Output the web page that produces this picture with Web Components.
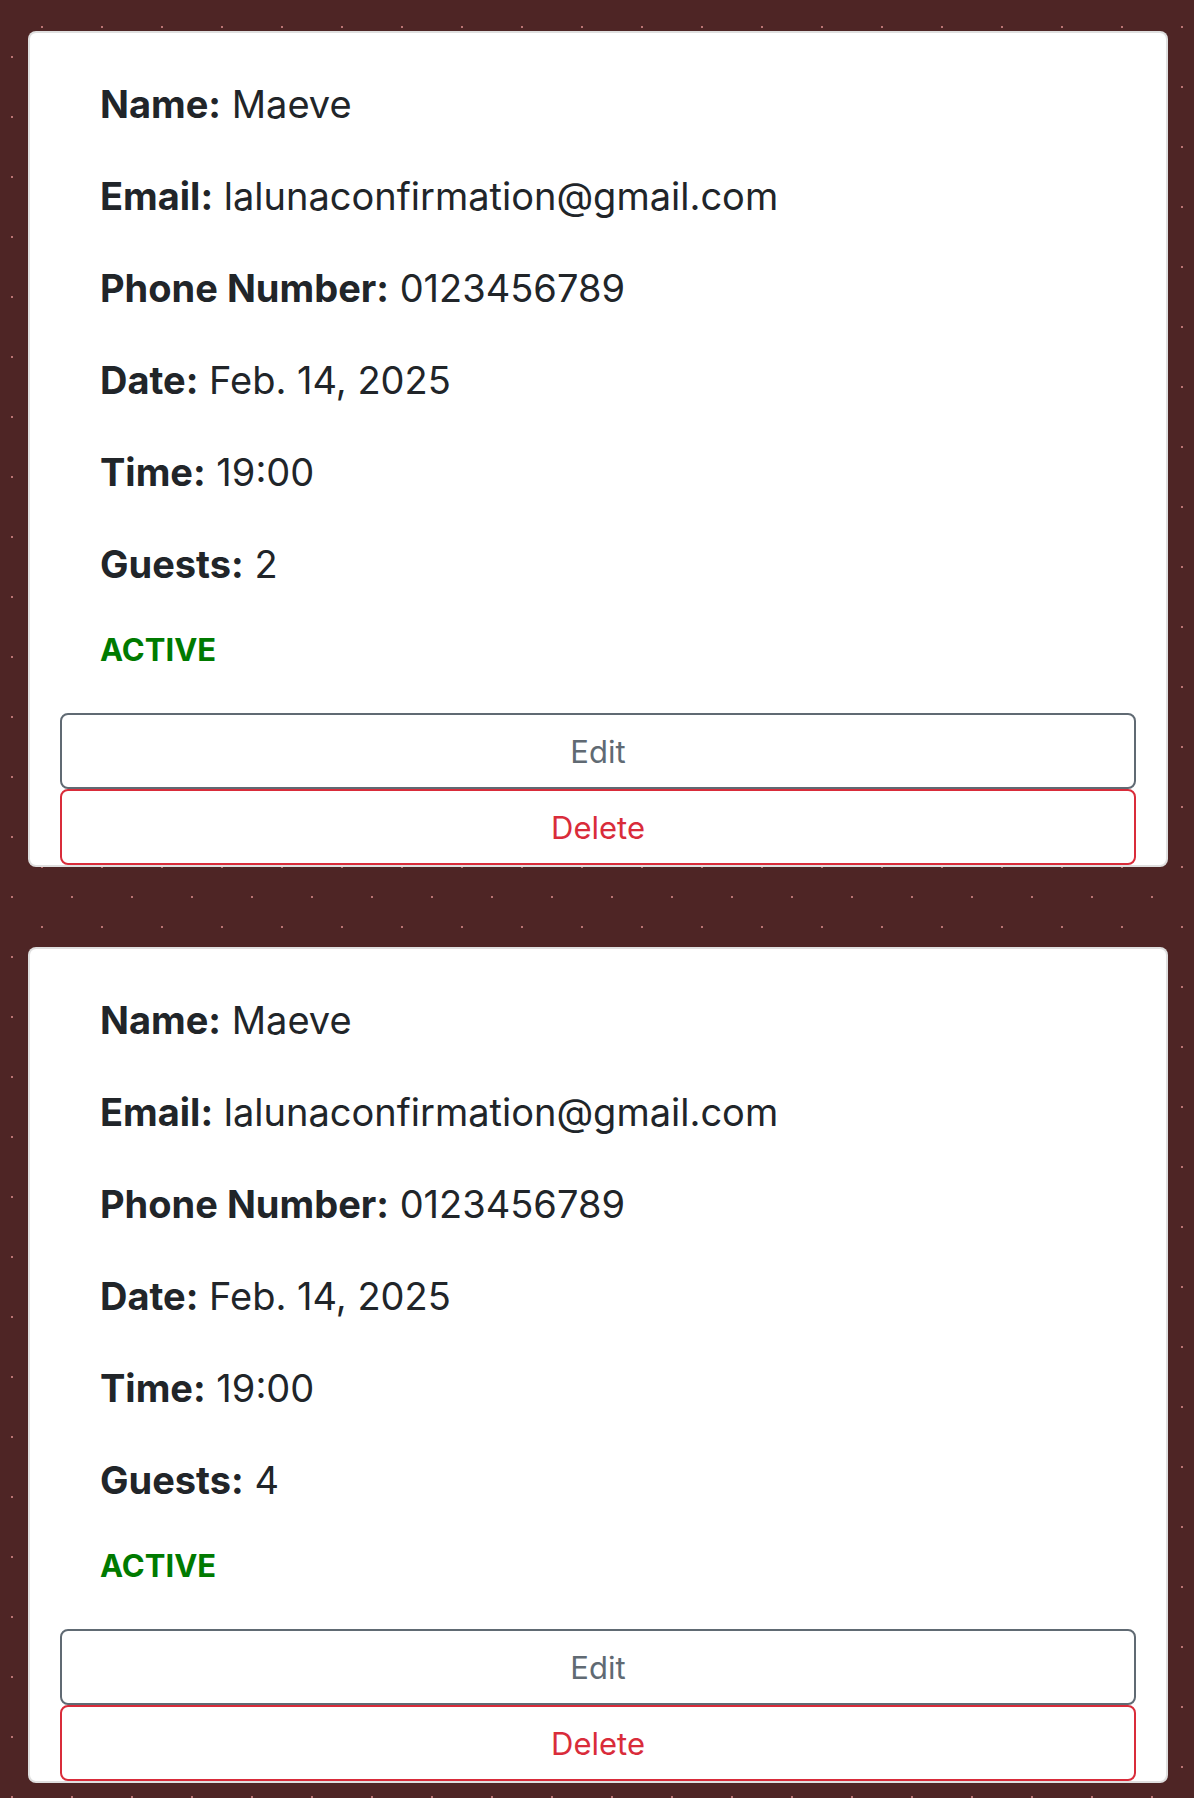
<!DOCTYPE html>
<html lang="en">
<head>
<meta charset="utf-8">
<meta name="viewport" content="width=device-width, initial-scale=1">
<title>Reservations</title>
<style>
body {
  margin: 0;
  min-height: 100vh;
  font-family: Inter, "Liberation Sans", sans-serif;
  color: #212529;
  /* two offset lattices of small square dots */
  background:
    conic-gradient(from 270deg at 2px 2px, #bb7474 90deg, transparent 0) 41px 26px / 60px 60px,
    conic-gradient(from 270deg at 2px 2px, #bb7474 90deg, transparent 0) 11px 56px / 60px 60px,
    #4e2525;
}
</style>
</head>
<body>
<booking-list>
  <booking-card status="ACTIVE">
    <booking-field label="Name">Maeve</booking-field>
    <booking-field label="Email">lalunaconfirmation@gmail.com</booking-field>
    <booking-field label="Phone Number">0123456789</booking-field>
    <booking-field label="Date">Feb. 14, 2025</booking-field>
    <booking-field label="Time">19:00</booking-field>
    <booking-field label="Guests">2</booking-field>
  </booking-card>
  <booking-card status="ACTIVE">
    <booking-field label="Name">Maeve</booking-field>
    <booking-field label="Email">lalunaconfirmation@gmail.com</booking-field>
    <booking-field label="Phone Number">0123456789</booking-field>
    <booking-field label="Date">Feb. 14, 2025</booking-field>
    <booking-field label="Time">19:00</booking-field>
    <booking-field label="Guests">4</booking-field>
  </booking-card>
</booking-list>
<script>
class BookingList extends HTMLElement {
  constructor() {
    super();
    this.attachShadow({ mode: 'open' }).innerHTML = `
      <style>
        :host { display: block; }
        main { display: flex; flex-direction: column; gap: 80px; padding: 31px 26px 15px 28px; }
      </style>
      <main><slot></slot></main>`;
  }
}
class BookingField extends HTMLElement {
  constructor() {
    super();
    this.attachShadow({ mode: 'open' }).innerHTML = `
      <style>
        :host { display: block; }
        p { margin: 0; font-size: 38px; line-height: 60px; overflow-wrap: anywhere; }
        strong { font-weight: 700; }
      </style>
      <p><strong></strong> <slot></slot></p>`;
  }
  connectedCallback() {
    this.shadowRoot.querySelector('strong').textContent = this.getAttribute('label') + ':';
  }
}
class ActionButton extends HTMLElement {
  constructor() {
    super();
    this.attachShadow({ mode: 'open' }).innerHTML = `
      <style>
        :host { display: block; --tone: #606a73; }
        :host([kind="danger"]) { --tone: #d92c3a; }
        button {
          display: block; box-sizing: border-box; width: 100%; margin: 0; padding: 13px 24px 11px;
          border: 2px solid var(--tone); border-radius: 8px; background: transparent;
          color: var(--tone); font: inherit; font-size: 31px; line-height: 48px; cursor: pointer;
        }
        button:hover { background: var(--tone); color: #fff; }
      </style>
      <button type="button"><slot></slot></button>`;
  }
}
class BookingCard extends HTMLElement {
  constructor() {
    super();
    this.attachShadow({ mode: 'open' }).innerHTML = `
      <style>
        :host { display: block; }
        article {
          background: #fff; border: 2px solid rgba(0, 0, 0, 0.125);
          border-radius: 8px; padding: 0 30px;
        }
        .details { display: flex; flex-direction: column; gap: 32px; padding: 41px 40px 39px; }
        .status { margin: 0; color: #007a00; font-size: 31px; font-weight: 700; line-height: 48px; }
        .actions { display: flex; flex-direction: column; }
      </style>
      <article>
        <div class="details">
          <slot></slot>
          <p class="status"></p>
        </div>
        <div class="actions">
          <action-button>Edit</action-button>
          <action-button kind="danger">Delete</action-button>
        </div>
      </article>`;
  }
  connectedCallback() {
    this.shadowRoot.querySelector('.status').textContent = this.getAttribute('status');
  }
}
customElements.define('booking-list', BookingList);
customElements.define('booking-field', BookingField);
customElements.define('action-button', ActionButton);
customElements.define('booking-card', BookingCard);
</script>
</body>
</html>
